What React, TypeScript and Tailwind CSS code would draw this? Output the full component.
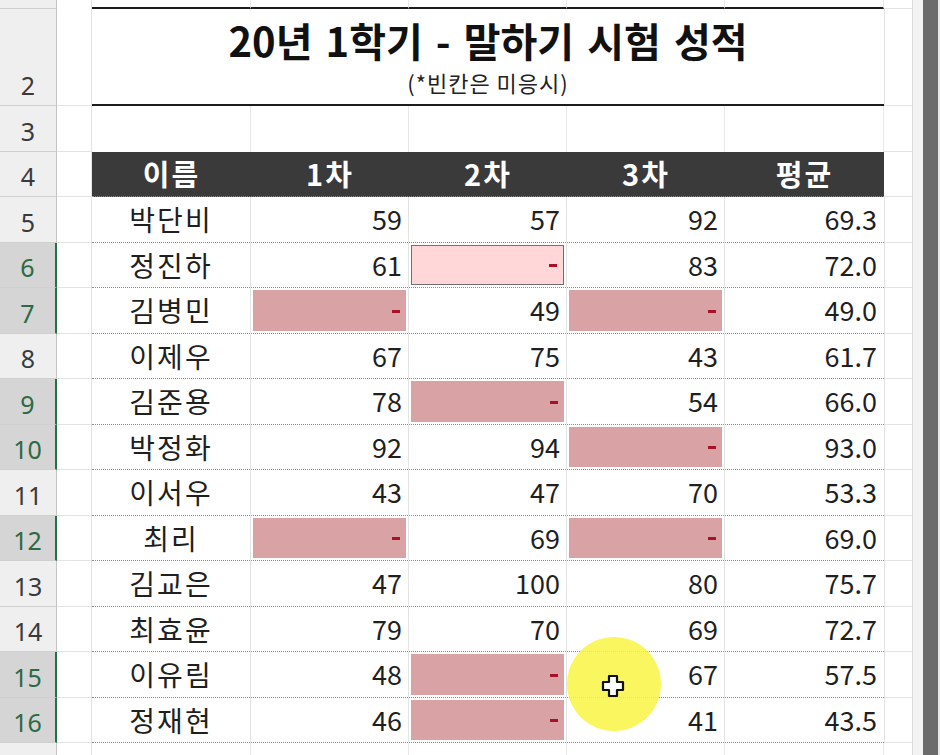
import React from "react";

const F = { fontFamily: '"Noto Sans CJK KR", "Noto Sans", sans-serif' } as React.CSSProperties;

type Cell = { v: string; kind?: "num" | "miss" | "active" };

const rows: { n: number; name: string; sel: boolean; c: Cell[]; avg: string }[] = [
  { n: 5, name: "박단비", sel: false, c: [{ v: "59" }, { v: "57" }, { v: "92" }], avg: "69.3" },
  { n: 6, name: "정진하", sel: true, c: [{ v: "61" }, { v: "-", kind: "active" }, { v: "83" }], avg: "72.0" },
  { n: 7, name: "김병민", sel: true, c: [{ v: "-", kind: "miss" }, { v: "49" }, { v: "-", kind: "miss" }], avg: "49.0" },
  { n: 8, name: "이제우", sel: false, c: [{ v: "67" }, { v: "75" }, { v: "43" }], avg: "61.7" },
  { n: 9, name: "김준용", sel: true, c: [{ v: "78" }, { v: "-", kind: "miss" }, { v: "54" }], avg: "66.0" },
  { n: 10, name: "박정화", sel: true, c: [{ v: "92" }, { v: "94" }, { v: "-", kind: "miss" }], avg: "93.0" },
  { n: 11, name: "이서우", sel: false, c: [{ v: "43" }, { v: "47" }, { v: "70" }], avg: "53.3" },
  { n: 12, name: "최리", sel: true, c: [{ v: "-", kind: "miss" }, { v: "69" }, { v: "-", kind: "miss" }], avg: "69.0" },
  { n: 13, name: "김교은", sel: false, c: [{ v: "47" }, { v: "100" }, { v: "80" }], avg: "75.7" },
  { n: 14, name: "최효윤", sel: false, c: [{ v: "79" }, { v: "70" }, { v: "69" }], avg: "72.7" },
  { n: 15, name: "이유림", sel: true, c: [{ v: "48" }, { v: "-", kind: "miss" }, { v: "67" }], avg: "57.5" },
  { n: 16, name: "정재현", sel: true, c: [{ v: "46" }, { v: "-", kind: "miss" }, { v: "41" }], avg: "43.5" },
];

function RowHead({ n, sel, h }: { n?: number; sel?: boolean; h: string }) {
  return (
    <div
      className={
        "w-[57px] shrink-0 flex items-end justify-center pb-[7px] border-b border-[#cfcfcf] text-[25px] leading-[26px] " +
        h +
        (sel
          ? " bg-[#d5d5d5] text-[#2c6a43] border-r-2 border-r-[#217346]"
          : " bg-[#efefef] text-[#3a3a3a] border-r border-r-[#c4c4c4]")
      }
      style={{ fontFamily: '"Noto Sans", "Open Sans", sans-serif' }}
    >
      {n ?? ""}
    </div>
  );
}

function DataCell({ cell }: { cell: Cell }) {
  if (cell.kind === "miss" || cell.kind === "active") {
    const active = cell.kind === "active";
    return (
      <div className="w-[158px] shrink-0 h-full border-r border-[#e3e3e3] p-[2px] flex">
        <div
          className={
            "flex-1 flex items-center justify-end pr-[6px] " +
            (active ? "bg-[#ffd7d8] border border-[#707070]" : "bg-[#d9a3a6]")
          }
        >
          <div className="w-[8px] h-[3px] bg-[#a5122a] mt-[2px]" />
        </div>
      </div>
    );
  }
  return (
    <div className="w-[158px] shrink-0 h-full border-r border-[#e3e3e3] flex items-center justify-end pr-[6px] text-[#1f1f1f]">
      {cell.v}
    </div>
  );
}

export default function App() {
  return (
    <div className="w-[940px] h-[755px] overflow-hidden bg-white flex" style={F}>
      <div className="w-[913px] shrink-0 flex flex-col border-r border-[#dcdcdc]">
        {/* row 1 */}
        <div className="flex h-[9px] shrink-0">
          <RowHead h="h-[9px]" />
          <div className="w-[35px] border-r border-[#e3e3e3]" />
          {[159, 158, 158, 158, 159].map((w, i) => (
            <div key={i} className="border-r border-[#e8e8e8] border-b-2 border-b-[#1c1c1c]" style={{ width: w }} />
          ))}
          <div className="flex-1 border-b border-[#e3e3e3]" />
        </div>
        {/* row 2 */}
        <div className="flex h-[97px] shrink-0">
          <RowHead n={2} h="h-[97px]" />
          <div className="w-[35px] border-r border-b border-[#e3e3e3]" />
          <div className="w-[792px] border-b-2 border-[#1c1c1c] flex flex-col items-center">
            <div className="mt-[9px] text-[40px] leading-[44px] font-bold text-[#111] [word-spacing:4px]">20년 1학기 - 말하기 시험 성적</div>
            <div className="mt-[7px] text-[22px] leading-[26px] text-[#222] tracking-[1px]">(*빈칸은 미응시)</div>
          </div>
          <div className="flex-1 border-b border-l border-[#e3e3e3]" />
        </div>
        {/* row 3 */}
        <div className="flex h-[46px] shrink-0">
          <RowHead n={3} h="h-[46px]" />
          <div className="w-[35px] border-r border-b border-[#e3e3e3]" />
          {[159, 158, 158, 158, 159].map((w, i) => (
            <div key={i} className="border-r border-[#e8e8e8]" style={{ width: w }} />
          ))}
          <div className="flex-1 border-b border-[#e3e3e3]" />
        </div>
        {/* row 4 header */}
        <div className="flex h-[45px] shrink-0">
          <RowHead n={4} h="h-[45px]" />
          <div className="w-[35px] border-r border-b border-[#e3e3e3]" />
          <div className="w-[792px] bg-[#3a3a3a] flex text-white font-bold text-[29px] tracking-[2px] border-b border-dotted border-[#8a8a8a]">
            {["이름", "1차", "2차", "3차", "평균"].map((t, i) => (
              <div key={t} className="flex items-center justify-center" style={{ width: i === 0 || i === 4 ? 159 : 158 }}>
                {t}
              </div>
            ))}
          </div>
          <div className="flex-1 border-b border-[#e3e3e3]" />
        </div>
        {/* data rows */}
        {rows.map((r) => (
          <div key={r.n} className="flex h-[45.5px] shrink-0">
            <RowHead n={r.n} sel={r.sel} h="h-[45.5px]" />
            <div className="w-[35px] border-r border-b border-[#e3e3e3]" />
            <div className="w-[792px] flex text-[27px] border-b border-dotted border-[#8a8a8a]">
              <div className="w-[159px] shrink-0 border-r border-[#e3e3e3] flex items-center justify-center text-[#1f1f1f] text-[28px] tracking-[2px]">
                {r.name}
              </div>
              {r.c.map((c, i) => (
                <DataCell key={i} cell={c} />
              ))}
              <div className="w-[159px] shrink-0 flex items-center justify-end pr-[7px] text-[#1f1f1f]">{r.avg}</div>
            </div>
            <div className="flex-1 border-b border-l border-[#e3e3e3]" />
          </div>
        ))}
        {/* row 17 */}
        <div className="flex h-[45px] shrink-0">
          <RowHead n={17} h="h-[45px]" />
          <div className="w-[35px] border-r border-[#e3e3e3]" />
          {[159, 158, 158, 158, 159].map((w, i) => (
            <div key={i} className="border-r border-[#e8e8e8]" style={{ width: w }} />
          ))}
          <div className="flex-1" />
        </div>
      </div>
      {/* right edge / scrollbar */}
      <div className="w-[10px] shrink-0 bg-[#f3f3f3]" />
      <div className="w-[15px] shrink-0 bg-[#6b6b6b]" />
      <div className="flex-1 bg-[#e9e9e9]" />

      {/* highlight + cursor overlay */}
      <div className="absolute left-[567px] top-[637px] w-[94px] h-[94px] rounded-full bg-[#f8f444] opacity-85 pointer-events-none" />
      <svg className="absolute left-[601px] top-[674px]" width="24" height="24" viewBox="0 0 24 24">
        <path
          d="M8 2 H16 V8 H22 V16 H16 V22 H8 V16 H2 V8 H8 Z"
          fill="#fff"
          stroke="#111"
          strokeWidth="2.2"
          strokeLinejoin="round"
        />
      </svg>
    </div>
  );
}
